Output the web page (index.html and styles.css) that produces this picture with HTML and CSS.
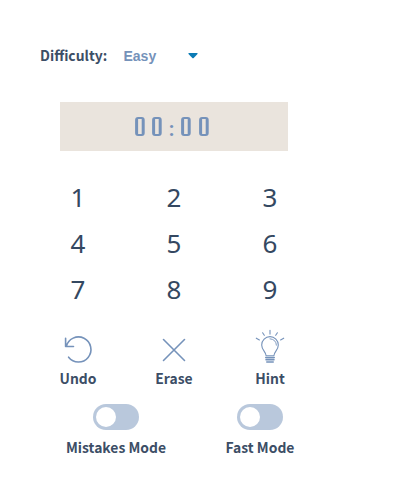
FILE: index.html
```html
<!DOCTYPE html>
<html lang="en">
<head>
<meta charset="utf-8">
<title>Sudoku</title>
<link rel="stylesheet" href="styles.css">
</head>
<body>
<main class="panel">
  <div class="difficulty">
    <span class="difficulty-label">Difficulty:</span>
    <span class="difficulty-value">Easy</span>
    <svg class="caret" width="10" height="6" viewBox="0 0 10 6"><path d="M1 0H9Q10 0 9.5 1L5.7 5Q5 5.6 4.3 5L.5 1Q0 0 1 0Z"/></svg>
  </div>
  <div class="timer"><span class="digit">0</span><span class="digit">0</span><span class="colon">:</span><span class="digit">0</span><span class="digit">0</span></div>
  <div class="keypad">
    <span>1</span><span>2</span><span>3</span>
    <span>4</span><span>5</span><span>6</span>
    <span>7</span><span>8</span><span>9</span>
  </div>
  <div class="actions">
    <div class="action">
      <svg width="36" height="36" viewBox="0 0 36 36"><path d="M8.6 25.2A12.5 12.5 0 1 0 6.3 14.5M5.6 6.3V14.5H13.5" stroke-width="1.6"/></svg>
      <span>Undo</span>
    </div>
    <div class="action">
      <svg width="36" height="36" viewBox="0 0 36 36"><path d="M7.5 7.5L28.5 28.5M28.5 7.5L7.5 28.5" stroke-width="1.6"/></svg>
      <span>Erase</span>
    </div>
    <div class="action">
      <svg width="36" height="36" viewBox="0 0 36 36">
        <path d="M14.1 23.8C14 19.6 9.7 18.3 9.7 12.9A8.3 8.3 0 0 1 26.3 12.9C26.3 18.3 22 19.6 21.9 23.8Z" stroke-width="1.1"/>
        <path d="M18 6.8Q24.2 7.3 24.4 13.2" stroke-width=".9"/>
        <path d="M13.8 25.6H22.2M14 27.8H22M14.8 30H21.2" stroke-width="1.6"/>
        <path d="M18 -1.7V2.1M10.6 .8L12.3 3.3M25.4 .8L23.7 3.3M4.3 6.2L7.4 8M31.7 6.2L28.6 8" stroke-width="1.1"/>
      </svg>
      <span>Hint</span>
    </div>
  </div>
  <div class="modes">
    <div class="mode"><span class="switch"></span><span>Mistakes Mode</span></div>
    <div class="mode"><span class="switch"></span><span>Fast Mode</span></div>
  </div>
</main>
</body>
</html>
```
FILE: styles.css
```css
*, *::before, *::after { box-sizing: border-box; }
body {
  margin: 0;
  background: #fff;
  color: #3c4e66;
  font: 700 13.9px/22px "Noto Sans CJK SC", sans-serif;
}
.panel { width: 348px; padding-top: 44px; }
.difficulty {
  display: flex;
  align-items: center;
  height: 22px;
  padding-left: 40px;
}
.difficulty-label { width: 83.5px; }
.difficulty-value {
  width: 64px;
  padding-top: 2px;
  color: #7592ba;
  font: 700 14px/22px "Liberation Sans", sans-serif;
}
.caret { margin-top: 2px; fill: #0b7bb5; }
.timer {
  display: flex;
  justify-content: center;
  width: 228px;
  height: 49px;
  margin: 36px 0 0 60px;
  padding-right: 5px;
  background: #eae4dd;
  color: #7592ba;
  font: 500 24px/49px Roboto, sans-serif;
}
.digit {
  position: relative;
  width: 17.5px;
  display: flex;
  justify-content: center;
  transform: scaleX(.6);
}
/* squared-off digit face, drawn over the glyph */
.digit::after {
  content: "";
  position: absolute;
  top: 15px;
  left: 1px;
  width: 15.6px;
  height: 19px;
  border: solid #7592ba;
  border-width: 2px 5px;
  border-radius: 5px / 3px;
  background: #eae4dd;
}
.colon {
  width: 11.5px;
  padding-top: 3px;
  text-align: center;
  font-size: 20px;
  font-weight: 700;
}
.keypad {
  display: grid;
  grid-template-columns: repeat(3, 96px);
  grid-auto-rows: 46px;
  margin: 23px 0 0 30px;
  color: #344861;
  text-align: center;
  font: 400 26px/46px "Noto Sans", sans-serif;
}
.actions {
  display: flex;
  margin: 20px 0 0 30px;
}
.action, .mode {
  display: flex;
  flex-direction: column;
  align-items: center;
}
.action { width: 96px; }
.action svg {
  overflow: visible;
  margin-bottom: -1px;
  fill: none;
  stroke: #7592ba;
  stroke-linecap: round;
  stroke-linejoin: round;
}
.modes { display: flex; margin: 15px 0 0 44px; }
.mode { width: 144px; gap: 6px; }
.switch {
  width: 46px;
  height: 26px;
  padding: 3px;
  border-radius: 13px;
  background: #b9c8dc;
}
.switch::before {
  content: "";
  display: block;
  width: 20px;
  height: 20px;
  border-radius: 50%;
  background: #fff;
}
```
